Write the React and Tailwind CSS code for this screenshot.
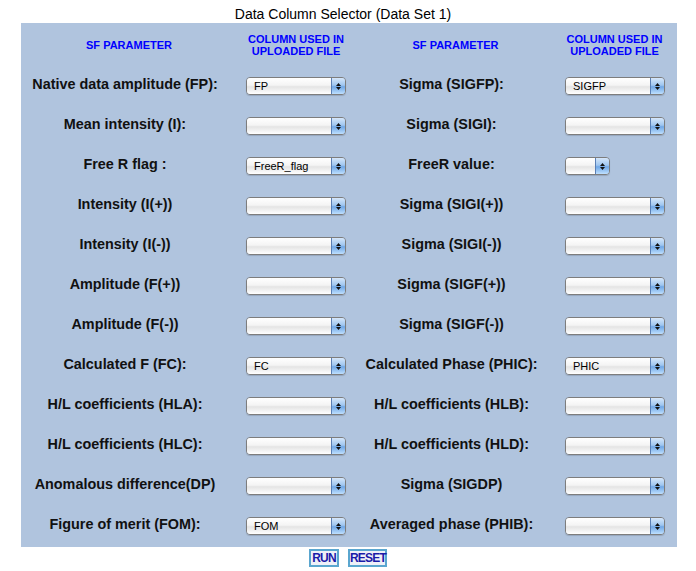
const rows = [
  ['Native data amplitude (FP):', 'FP', 'Sigma (SIGFP):', 'SIGFP'],
  ['Mean intensity (I):', '', 'Sigma (SIGI):', ''],
  ['Free R flag :', 'FreeR_flag', 'FreeR value:', null],
  ['Intensity (I(+))', '', 'Sigma (SIGI(+))', ''],
  ['Intensity (I(-))', '', 'Sigma (SIGI(-))', ''],
  ['Amplitude (F(+))', '', 'Sigma (SIGF(+))', ''],
  ['Amplitude (F(-))', '', 'Sigma (SIGF(-))', ''],
  ['Calculated F (FC):', 'FC', 'Calculated Phase (PHIC):', 'PHIC'],
  ['H/L coefficients (HLA):', '', 'H/L coefficients (HLB):', ''],
  ['H/L coefficients (HLC):', '', 'H/L coefficients (HLD):', ''],
  ['Anomalous difference(DP)', '', 'Sigma (SIGDP)', ''],
  ['Figure of merit (FOM):', 'FOM', 'Averaged phase (PHIB):', ''],
]

const Select = ({ value, small }) => (
  <div
    className={`flex h-[18px] ${small ? 'w-[45px]' : 'w-[100px]'} rounded-[4px] border border-[#7d7d7d] overflow-hidden shadow-[0_1px_1px_rgba(0,0,0,0.15)]`}
  >
    <div className="flex-1 flex items-center pl-[7px] text-[11px] text-black bg-[linear-gradient(#ffffff,#f4f4f4_45%,#e4e4e4_55%,#ffffff)]">
      {value}
    </div>
    <div className="w-[14px] border-l border-[#5a7fb5] flex flex-col items-center justify-center gap-[1px] bg-[linear-gradient(#d6e7fa,#9fc6f0_45%,#6fa7e6_55%,#bfe0ff)]">
      <svg width="5" height="3" viewBox="0 0 5 3"><path d="M2.5 0 L5 3 L0 3 Z" fill="#111" /></svg>
      <svg width="5" height="3" viewBox="0 0 5 3"><path d="M0 0 L5 0 L2.5 3 Z" fill="#111" /></svg>
    </div>
  </div>
)

const Label = ({ children }) => (
  <div className="flex items-center justify-center text-[14.4px] font-bold text-[#111] pb-[3px]">{children}</div>
)

export default function App() {
  return (
    <div className="w-[696px] h-[571px] bg-white font-['Liberation_Sans',Arial,sans-serif]">
      <div className="h-[23px] flex items-end justify-center pr-[10px] pb-[2px] text-[14px] text-black leading-none">
        Data Column Selector (Data Set 1)
      </div>
      <div className="ml-[21px] w-[656px] h-[524px] bg-[#b0c4de]">
        <div className="grid grid-cols-[208px_132px_181px_135px] h-[43px] items-center text-[11px] font-bold text-[#0000ff] leading-[12px] text-center">
          <div className="pl-[8px]">SF PARAMETER</div>
          <div className="pl-[2px]">COLUMN USED IN<br />UPLOADED FILE</div>
          <div className="pl-[8px]">SF PARAMETER</div>
          <div className="pl-[10px]">COLUMN USED IN<br />UPLOADED FILE</div>
        </div>
        {rows.map(([a, av, b, bv], i) => (
          <div key={i} className="grid grid-cols-[208px_132px_181px_135px] h-[40px]">
            <Label>{a}</Label>
            <div className="flex items-center pl-[17px]">
              <Select value={av} />
            </div>
            <Label>{b}</Label>
            <div className="flex items-center pl-[23px]">
              <Select value={bv} small={bv === null} />
            </div>
          </div>
        ))}
      </div>
      <div className="flex justify-center gap-[9px] pt-[2px]">
        <button className="h-[18px] w-[30px] border-2 border-[#5aa6cf] bg-[#eef0f8] text-[12px] font-bold text-[#1a1aa8] leading-none tracking-[-0.8px]">
          RUN
        </button>
        <button className="h-[18px] w-[39px] border-2 border-[#5aa6cf] bg-[#eef0f8] text-[12px] font-bold text-[#1a1aa8] leading-none tracking-[-0.8px]">
          RESET
        </button>
      </div>
    </div>
  )
}
